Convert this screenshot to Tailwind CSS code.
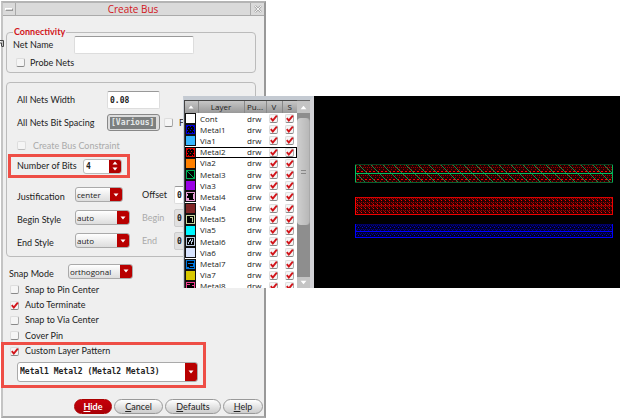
<!DOCTYPE html>
<html lang="en">
<head>
<meta charset="utf-8">
<meta name="viewport" content="width=device-width, initial-scale=1">
<title>Create Bus</title>
<script src="https://cdn.jsdelivr.net/npm/@tailwindcss/browser@4"></script>
</head>
<body class="bg-white font-['Lato','Open_Sans',sans-serif] text-[9px] leading-[12px] text-[#222]">
<svg class="hidden" aria-hidden="true">
  <symbol id="tick" viewBox="0 0 9 9"><path d="M1.8 4.2 3.8 6.6 7.8 1.6" fill="none" stroke="#d2141a" stroke-width="1.9"/></symbol>
  <symbol id="down" viewBox="0 0 6 4"><path d="M.5.5h5L3 3.6z" fill="#fff"/></symbol>
</svg>
<main class="relative min-h-screen pl-[1px] pt-[1px]">
  <svg class="absolute left-0 top-[40px] h-[7px] w-[4px]" viewBox="0 0 4 7" aria-hidden="true"><path d="M0 .5h3.5v6H2M0 3h1.5v3.5" fill="none" stroke="#444"/></svg>

  <form class="w-[265px] border-2 border-t-[#b4b4b4] border-l-[#c4c4c4] border-r-[#999] border-b-[#aaa] bg-[#efefef] pb-[2px]" onsubmit="return false">
    <header class="flex h-[13px] items-stretch border-b border-[#aaa] bg-[#dadada]">
      <button type="button" aria-label="Window menu" class="grid w-[13px] place-items-center border-r border-[#aaa]"><span class="h-[3px] w-[8px] border border-t-white border-l-white border-r-[#999] border-b-[#999]"></span></button>
      <h1 class="flex-1 text-center font-['Open_Sans',sans-serif] text-[10px] leading-[12px] text-[#d2141a]">Create Bus</h1>
      <button type="button" aria-label="Close" class="grid w-[14px] place-items-center border-l border-[#aaa]">
        <svg class="size-[8px]" viewBox="0 0 8 8"><path d="M1 1l6 6M7 1 1 7" stroke="#aaa" stroke-width="2.4"/><path d="M1 1l6 6M7 1 1 7" stroke="#f4f4f4"/></svg>
      </button>
    </header>

    <div class="flex flex-col px-[3px] pr-[8px]">
      <fieldset class="mt-[10px] rounded-[4px] border border-[#bbb] px-[6px] pb-[2px]">
        <legend class="-mb-[2px] px-[1px] font-bold leading-[12px] text-[#d2141a]">Connectivity</legend>
        <div class="flex h-[18px] items-center">
          <label for="net" class="w-[61px]">Net Name</label>
          <input id="net" type="text" class="h-[18px] w-[120px] rounded-[2px] border border-[#ddd] border-t-[#999] bg-white px-[3px]">
        </div>
        <div class="mt-[1px] flex h-[15px] items-center pl-[3px]">
          <label class="flex items-center gap-[5px]"><input type="checkbox" class="size-[9px] appearance-none rounded-[2px] border border-[#ddd] border-b-[#888] border-r-[#aaa] bg-[#f5f5f5]">Probe Nets</label>
        </div>
      </fieldset>

      <fieldset class="mt-[9px] rounded-[4px] border border-[#bbb] pb-[4px] pl-[10px] pt-[5px]">
        <div class="flex h-[23px] items-center">
          <label for="width" class="w-[90px]">All Nets Width</label>
          <input id="width" type="text" value="0.08" class="h-[18px] w-[53px] rounded-[2px] border border-[#ddd] border-t-[#999] bg-white px-[2px] pt-[1px] font-['DejaVu_Sans_Mono',monospace] text-[8px] font-bold">
        </div>
        <div class="flex h-[23px] items-center">
          <label for="spacing" class="w-[90px]">All Nets Bit Spacing</label>
          <div class="mr-[4px] flex h-[17px] w-[53px] items-center rounded-[3px] border border-[#888] bg-[#ddd] px-[2px]"><input id="spacing" type="text" value="[Various]" class="h-[12px] w-[46px] bg-[#7c7f7f] pl-[1px] font-['DejaVu_Sans_Mono',monospace] text-[8px] font-bold text-[#e4e8e8]"></div>
          <label class="flex items-center gap-[6px]"><input type="checkbox" class="size-[9px] appearance-none rounded-[2px] border border-[#ddd] border-b-[#888] border-r-[#aaa] bg-[#f5f5f5]">F</label>
        </div>
        <div class="flex h-[23px] items-center">
          <label class="flex items-center gap-[7px] text-[#aaa]"><input type="checkbox" disabled class="size-[9px] appearance-none rounded-[2px] border border-[#ddd] border-b-[#bbb] bg-[#f5f5f5]">Create Bus Constraint</label>
        </div>
        <div class="flex h-[18px] items-center">
          <label for="bits" class="w-[66px]">Number of Bits</label>
          <div class="flex h-[15px] w-[39px] overflow-hidden rounded-[3px] border border-[#bbb] bg-white">
            <input id="bits" type="text" inputmode="numeric" value="4" class="w-0 flex-1 pl-[2px] pt-[1px] font-['DejaVu_Sans_Mono',monospace] text-[8px] font-bold">
            <div class="flex w-[12px] flex-col bg-[#b00000]">
              <button type="button" aria-label="Increase" class="grid flex-1 place-items-center"><svg class="h-[4px] w-[6px] rotate-180"><use href="#down"/></svg></button>
              <button type="button" aria-label="Decrease" class="grid flex-1 place-items-center"><svg class="h-[4px] w-[6px]"><use href="#down"/></svg></button>
            </div>
          </div>
        </div>
        <div class="mt-[8px] flex h-[23px] items-center">
          <label for="just" class="w-[58px] pt-[5px]">Justification</label>
          <div class="relative mr-[19px] h-[15px] w-[48px] overflow-hidden rounded-[3px] border border-[#aaa] bg-linear-to-b from-white to-[#ddd]">
            <select id="just" class="block h-full w-full appearance-none pl-[1px] font-['Open_Sans',sans-serif] text-[8px] leading-[11px]"><option>center</option></select>
            <span class="pointer-events-none absolute inset-y-0 right-0 grid w-[12px] place-items-center bg-[#b80000]"><svg class="h-[4px] w-[6px]"><use href="#down"/></svg></span>
          </div>
          <label for="offset" class="w-[32px]">Offset</label>
          <input id="offset" type="text" value="0" class="h-[18px] w-[50px] rounded-[2px] border border-[#ddd] border-t-[#999] bg-white px-[2px] pt-[1px] font-['DejaVu_Sans_Mono',monospace] text-[8px] font-bold">
        </div>
        <div class="flex h-[23px] items-center">
          <label for="begin" class="w-[58px] pt-[5px]">Begin Style</label>
          <div class="relative mr-[12px] h-[15px] w-[55px] overflow-hidden rounded-[3px] border border-[#aaa] bg-linear-to-b from-white to-[#ddd]">
            <select id="begin" class="block h-full w-full appearance-none pl-[1px] font-['Open_Sans',sans-serif] text-[8px] leading-[11px]"><option>auto</option></select>
            <span class="pointer-events-none absolute inset-y-0 right-0 grid w-[12px] place-items-center bg-[#b80000]"><svg class="h-[4px] w-[6px]"><use href="#down"/></svg></span>
          </div>
          <label for="beginv" class="w-[32px] text-[#aaa]">Begin</label>
          <input id="beginv" disabled type="text" value="0" class="h-[18px] w-[50px] rounded-[2px] border border-[#ccc] bg-[#e0e0e0] px-[2px] pt-[1px] font-['DejaVu_Sans_Mono',monospace] text-[8px] font-bold">
        </div>
        <div class="flex h-[23px] items-center">
          <label for="end" class="w-[58px] pt-[5px]">End Style</label>
          <div class="relative mr-[12px] h-[15px] w-[55px] overflow-hidden rounded-[3px] border border-[#aaa] bg-linear-to-b from-white to-[#ddd]">
            <select id="end" class="block h-full w-full appearance-none pl-[1px] font-['Open_Sans',sans-serif] text-[8px] leading-[11px]"><option>auto</option></select>
            <span class="pointer-events-none absolute inset-y-0 right-0 grid w-[12px] place-items-center bg-[#b80000]"><svg class="h-[4px] w-[6px]"><use href="#down"/></svg></span>
          </div>
          <label for="endv" class="w-[32px] text-[#aaa]">End</label>
          <input id="endv" disabled type="text" value="0" class="h-[18px] w-[50px] rounded-[2px] border border-[#ccc] bg-[#e0e0e0] px-[2px] pt-[1px] font-['DejaVu_Sans_Mono',monospace] text-[8px] font-bold">
        </div>
      </fieldset>

      <div class="mt-[3px] flex h-[22px] items-center pl-[3px]">
        <label for="snap" class="w-[59px] pt-[5px]">Snap Mode</label>
        <div class="relative h-[15px] w-[65px] overflow-hidden rounded-[3px] border border-[#aaa] bg-linear-to-b from-white to-[#ddd]">
          <select id="snap" class="block h-full w-full appearance-none pl-[1px] font-['Open_Sans',sans-serif] text-[8px] leading-[11px]"><option>orthogonal</option></select>
          <span class="pointer-events-none absolute inset-y-0 right-0 grid w-[12px] place-items-center bg-[#b80000]"><svg class="h-[4px] w-[6px]"><use href="#down"/></svg></span>
        </div>
      </div>

      <div id="options" class="grid h-[77px] auto-rows-fr pl-[4px]"></div>

      <div class="relative ml-[11px] mt-[3px] h-[20px] w-[181px] overflow-hidden rounded-[3px] border border-[#aaa] bg-white">
        <select aria-label="Custom Layer Pattern" class="block h-full w-full appearance-none pl-[2px] font-['DejaVu_Sans_Mono',monospace] text-[8px] font-bold leading-[18px]"><option>Metal1 Metal2 (Metal2 Metal3)</option></select>
        <span class="pointer-events-none absolute inset-y-0 right-0 grid w-[12px] place-items-center bg-[#b80000]"><svg class="h-[4px] w-[6px]"><use href="#down"/></svg></span>
      </div>
    </div>

    <footer class="mt-[17px] flex justify-end gap-[2px] pr-[1px] leading-[13px]">
      <button type="submit" class="h-[15px] w-[38px] rounded-full border border-[#a00] bg-linear-to-b from-[#c8000a] to-[#a80008] font-bold text-white"><u>H</u>ide</button>
      <button type="button" class="h-[15px] w-[49px] rounded-full border border-[#999] bg-linear-to-b from-white to-[#ccc]"><u>C</u>ancel</button>
      <button type="button" class="h-[15px] w-[56px] rounded-full border border-[#999] bg-linear-to-b from-white to-[#ccc]"><u>D</u>efaults</button>
      <button type="button" class="h-[15px] w-[40px] rounded-full border border-[#999] bg-linear-to-b from-white to-[#ccc]"><u>H</u>elp</button>
    </footer>
  </form>

  <div class="pointer-events-none absolute left-[8px] top-[154px] h-[24px] w-[122px] border-3 border-[#ee4e46]"></div>
  <div class="pointer-events-none absolute left-[1px] top-[342px] h-[46px] w-[205px] border-3 border-[#ee4e46]"></div>

  <section class="absolute left-[183px] right-0 top-[96px] flex h-[192px]" aria-label="Layout viewer">
    <div class="flex w-[131px] overflow-hidden border-l border-r-4 border-t-4 border-l-[#ccd2da] border-r-[#d2d2d6] border-t-[#c4cad2] bg-[#999] font-['Open_Sans',sans-serif] text-[8px]">
      <div class="w-[113px] overflow-hidden border-l border-t border-[#444] bg-white">
        <table class="h-[191px] w-full table-fixed border-collapse leading-[10px]">
          <colgroup><col class="w-[13px]"><col class="w-[46px]"><col class="w-[22px]"><col class="w-[16px]"><col class="w-[15px]"></colgroup>
          <thead><tr class="h-[12px] bg-linear-to-b from-[#c6c6c6] to-[#999]">
            <th class="border-r border-[#888] p-0" aria-label="Colour"><svg class="mx-auto h-[4px] w-[6px] rotate-180"><use href="#down"/></svg></th>
            <th class="border-r border-[#888] p-0 font-normal">Layer</th>
            <th class="border-r border-[#888] p-0 font-normal">Pu...</th>
            <th class="border-r border-[#888] p-0 font-normal">V</th>
            <th class="p-0 font-normal">S</th>
          </tr></thead>
          <tbody id="layers"></tbody>
        </table>
      </div>
      <div class="flex flex-1 flex-col border-t border-[#666] bg-[#8e8e8e]">
        <button type="button" aria-label="Scroll up" class="grid h-[12px] place-items-center bg-[#c4c4c4]"><svg class="h-[5px] w-[7px] rotate-180"><use href="#down"/></svg></button>
        <div class="mt-[5px] grid h-[107px] place-items-center rounded-[4px] border-r border-[#aaa] bg-linear-to-r from-[#d0d0d0] to-[#b8b8b8]"><span class="h-[4px] w-[5px] border-y border-[#888]"></span></div>
        <button type="button" aria-label="Scroll down" class="mt-auto grid h-[11px] place-items-center bg-[#c4c4c4]"><svg class="h-[5px] w-[7px]"><use href="#down"/></svg></button>
      </div>
    </div>
    <div class="flex flex-1 flex-col bg-black pl-[41px] pr-[7px] pt-[68px]">
      <svg class="h-[19px] w-full" role="img" aria-label="Metal3 wire" shape-rendering="crispEdges">
        <defs>
          <pattern id="g1" width="4" height="8" patternUnits="userSpaceOnUse"><path d="M0 3h1v1h-1zM2 3h1v1h-1zM0 5h1v1h-1zM1 1h1v1h-1z" fill="#a00000"/><path d="M2 7h2v1h-2z" fill="#ff0000"/></pattern>
          <pattern id="g2" width="35" height="19" patternUnits="userSpaceOnUse"><path d="M-33-1l21 21M-21-1l21 21M-9-1l21 21M2-1l21 21M14-1l21 21M26-1l21 21" stroke="#168846"/></pattern>
        </defs>
        <rect width="100%" height="19" fill="#240000"/><rect width="100%" height="19" fill="url(#g1)"/><rect width="100%" height="19" fill="url(#g2)"/>
        <rect width="100%" height="1" fill="#064020"/><rect y="18" width="100%" height="1" fill="#0a6030"/>
        <rect y="9" width="100%" height="1" fill="#00c060"/><rect y="1" width="1" height="17" fill="#00c060"/>
        <svg x="100%" overflow="visible"><rect x="-1" y="1" width="1" height="17" fill="#00b058"/></svg>
      </svg>
      <svg class="mt-[14px] h-[18px] w-full" role="img" aria-label="Metal2 wire" shape-rendering="crispEdges">
        <defs><pattern id="r1" width="4" height="4" patternUnits="userSpaceOnUse"><path d="M0 1h1v1h-1zM2 1h1v1h-1zM1 2h1v1h-1z" fill="#a00000"/><path d="M2 3h1v1h-1z" fill="#ff0000"/></pattern></defs>
        <rect width="100%" height="18" fill="#280000"/><rect width="100%" height="18" fill="url(#r1)"/><rect y="8" width="100%" height="1" fill="#900"/>
        <rect width="100%" height="1" fill="#d00"/><rect y="17" width="100%" height="1" fill="#e00"/><rect width="1" height="18" fill="#f00"/>
        <svg x="100%" overflow="visible"><rect x="-1" width="1" height="18" fill="#e00"/></svg>
      </svg>
      <svg class="mt-[9px] h-[14px] w-full" role="img" aria-label="Metal1 wire" shape-rendering="crispEdges">
        <defs><pattern id="b1" width="4" height="4" patternUnits="userSpaceOnUse"><path d="M0 1h1v1h-1zM2 1h1v1h-1zM1 2h1v1h-1z" fill="#000090"/><path d="M3 3h1v1h-1z" fill="#0000e0"/></pattern></defs>
        <rect width="100%" height="14" fill="#000028"/><rect width="100%" height="14" fill="url(#b1)"/><rect width="100%" height="1" fill="#000060"/>
        <rect y="7" width="100%" height="1" fill="#00f"/><rect y="13" width="100%" height="1" fill="#00f"/><rect width="1" height="14" fill="#00f"/>
        <svg x="100%" overflow="visible"><rect x="-1" width="1" height="14" fill="#00f"/></svg>
      </svg>
    </div>
  </section>
</main>
<script>
const box = (checked, name) => `<span class="relative block size-[9px]"><input type="checkbox" ${checked ? 'checked' : ''} ${name ? `aria-label="${name}"` : ''} class="peer block size-[9px] appearance-none rounded-[2px] border border-[#ddd] border-b-[#888] border-r-[#aaa] bg-[#f5f5f5]"><svg class="pointer-events-none absolute inset-0 hidden size-[9px] peer-checked:block"><use href="#tick"/></svg></span>`;

document.getElementById('options').innerHTML = [
  ['Snap to Pin Center', 0], ['Auto Terminate', 1], ['Snap to Via Center', 0], ['Cover Pin', 0], ['Custom Layer Pattern', 1]
].map(([t, c]) => `<label class="flex items-center gap-[6px]">${box(c)}${t}</label>`).join('');

const dots = c => `<path d="M2 2h1v1h-1zM5 2h1v1h-1zM8 2h1v1h-1zM3 4h1v1h-1zM6 4h1v1h-1zM2 6h1v1h-1zM5 6h1v1h-1zM8 6h1v1h-1zM3 8h1v1h-1zM7 8h1v1h-1z" fill="${c}"/>`;
const layers = [
  ['Cont', '#ffffff'],
  ['Metal1', '#0000dd', dots('#0000dd')],
  ['Via1', '#38b6ff'],
  ['Metal2', '#dd0000', dots('#dd0000')],
  ['Via2', '#ff8000'],
  ['Metal3', '#00b058', '<path d="M2 2l7 7" stroke="#00b058"/>'],
  ['Via3', '#9a00e6'],
  ['Metal4', '#e8a0d8', '<path d="M1 3h2v2H1zM8 3h2v5H8zM2 7h2v2H2z" fill="#e8a0d8"/>'],
  ['Via4', '#802626'],
  ['Metal5', '#c8d8a0', '<path d="M5 3h3M7.500 3v5" stroke="#c8d8a0"/>'],
  ['Via5', '#00f6ff'],
  ['Metal6', '#b8c8e0', '<path d="M3 8 6 3M6 8l2-5" stroke="#b8c8e0"/>'],
  ['Via6', '#d8e4ff'],
  ['Metal7', '#0078e0', '<path d="M3 4h5v3H5M2 8h2" stroke="#0078e0" fill="none"/>'],
  ['Via7', '#d8c800'],
  ['Metal8', '#f04090', '<path d="M2 3h3M7 4h2" stroke="#f04090"/>']
];
document.getElementById('layers').innerHTML = layers.map(([n, c, art]) => `
  <tr class="${n === 'Metal2' ? 'outline-1 -outline-offset-1 outline-black' : ''}">
    <td class="p-0"><svg class="block size-[11px]" viewBox="0 0 11 11" shape-rendering="crispEdges"><rect width="11" height="11" fill="#111"/><rect x="1" y="1" width="9" height="9" fill="${c}"/>${art ? `<rect x="2" y="2" width="7" height="7" fill="#000"/>${art}` : ''}</svg></td>
    <td class="p-0 pl-[2px]">${n}</td><td class="p-0 pl-[3px]">drw</td>
    <td class="p-0 pl-[3px]">${box(1, n + ' visible')}</td><td class="p-0 pl-[3px]">${box(1, n + ' selectable')}</td>
  </tr>`).join('');
</script>
</body>
</html>
